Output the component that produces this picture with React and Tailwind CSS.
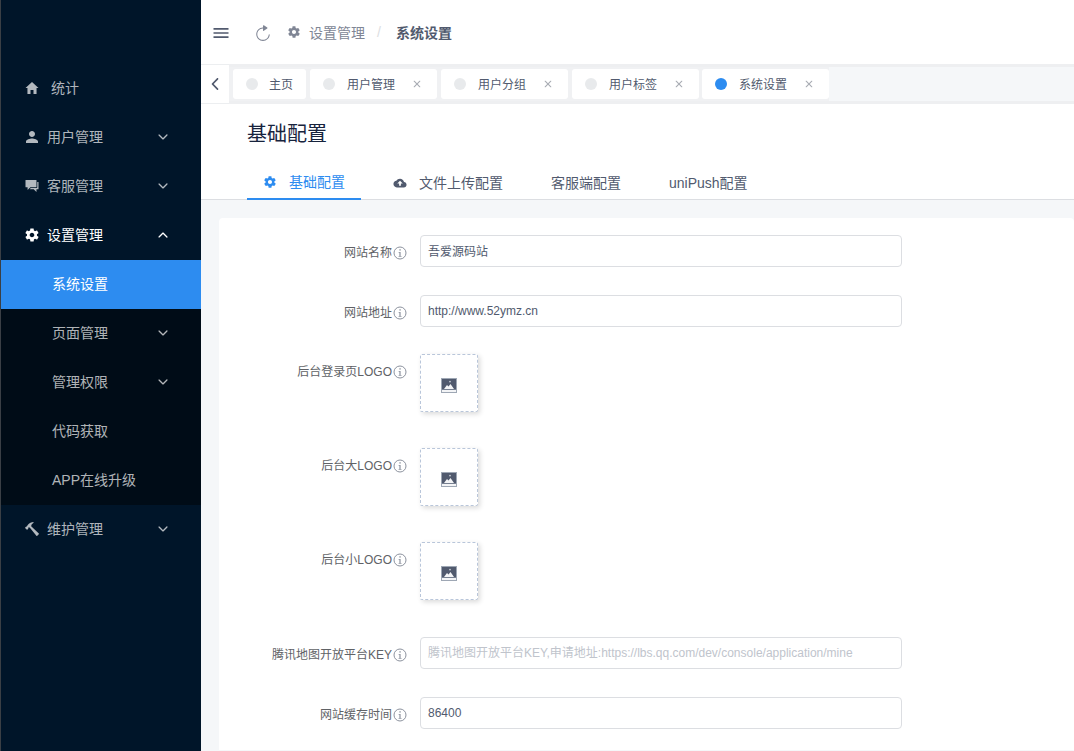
import React from "react";
import {
  IoMdHome, IoMdPerson, IoMdChatboxes, IoMdSettings, IoMdHammer, IoIosArrowDown, IoIosArrowUp,
  IoIosArrowBack, IoMdCloudUpload, IoIosRefresh, IoIosClose, IoMdMenu,
} from "react-icons/io";

const Info = () => (
  <svg width="14" height="14" viewBox="0 0 14 14" className="shrink-0">
    <circle cx="7" cy="7" r="6" fill="none" stroke="#8c929e" strokeWidth="1" />
    <rect x="6.4" y="3.2" width="1.3" height="1.4" fill="#8c929e" />
    <path d="M5.6 5.9H7.6V9.9H8.5V10.7H5.6V9.9H6.4V6.7H5.6Z" fill="#8c929e" />
  </svg>
);

const Pic = () => (
  <svg width="16" height="15" viewBox="0 0 16 15">
    <rect x="0" y="0" width="16" height="15" fill="#9ea7b4" />
    <rect x="1" y="1" width="14" height="10.5" fill="#515a6e" />
    <rect x="1" y="12" width="14" height="2" fill="#f3f4f6" />
    <path d="M3 11 L6 7 L7.5 8.5 L9.5 6 L13 11Z" fill="#f3f4f6" />
    <circle cx="9" cy="3.6" r="0.9" fill="#c7ccd4" />
  </svg>
);

const MenuItem = ({ icon: Icon, label, arrow, active, sub, iconSize = 16, textClass = "ml-[8px]" }) => (
  <div
    className={`flex h-[49px] items-center pb-[2px] text-sm ${active ? "text-white" : "text-white/70"} ${sub ? "pl-[51px]" : "pl-[24px]"}`}
  >
    {Icon && (
      <span className="flex w-[14px] justify-center">
        <Icon size={iconSize} className="shrink-0" />
      </span>
    )}
    <span className={sub ? "" : textClass}>{label}</span>
    {arrow === "down" && <IoIosArrowDown size={14} className="absolute left-[155px]" />}
    {arrow === "up" && <IoIosArrowUp size={14} className="absolute left-[155px]" />}
  </div>
);

const Tab = ({ label, active, close = true, className = "" }) => (
  <div className={`flex h-[30px] items-center rounded-[3px] bg-white pl-[13px] text-xs text-[#515a6e] ${className}`}>
    <span className={`h-3 w-3 rounded-full ${active ? "bg-[#2d8cf0]" : "bg-[#e8eaec]"}`} />
    <span className={`pt-[2px] ${close ? "ml-[12px]" : "ml-[11px]"}`}>{label}</span>
    {close && <IoIosClose size={18} className="ml-[13px] text-[#a8acb3]" />}
  </div>
);

const Row = ({ label, children, className = "mb-7" }) => (
  <div className={`flex ${className}`}>
    <div className="flex h-8 w-[188px] items-center justify-end pt-[3px] text-xs text-[#606266]">
      <span className="mr-px">{label}</span>
      <Info />
    </div>
    <div className="ml-[13px]">{children}</div>
  </div>
);

const Field = ({ value, placeholder, valueClass = "" }) => (
  <div className="flex h-8 w-[482px] items-center rounded border border-[#dcdee2] bg-white px-[7px] text-xs whitespace-nowrap">
    {value ? <span className={`text-[#515a6e] ${valueClass}`}>{value}</span> : <span className="text-[#c0c4cc]">{placeholder}</span>}
  </div>
);

const Upload = () => (
  <div className="flex h-[58px] w-[58px] items-center justify-center rounded-[2px] border border-dashed border-[#b9c6da] bg-white pt-[4px] shadow-[2px_2px_5px_rgba(0,0,0,0.15)]">
    <Pic />
  </div>
);

export default function App() {
  return (
    <div
      className="flex h-[751px] w-[1074px] overflow-hidden bg-white"
      style={{ fontFamily: '"Liberation Sans", "Noto Sans CJK SC", sans-serif' }}
    >
      <div className="w-px shrink-0 bg-[#3a3f45]" />
      <aside className="relative w-[200px] shrink-0 bg-[#001529] pt-[64px]">
        <MenuItem icon={IoMdHome} label="统计" textClass="ml-[12px]" />
        <MenuItem icon={IoMdPerson} label="用户管理" arrow="down" />
        <MenuItem icon={IoMdChatboxes} label="客服管理" arrow="down" />
        <MenuItem icon={IoMdSettings} label="设置管理" arrow="up" active />
        <div className="bg-[#000c17]">
          <div className="bg-[#2d8cf0]">
            <MenuItem label="系统设置" sub active />
          </div>
          <MenuItem label="页面管理" sub arrow="down" />
          <MenuItem label="管理权限" sub arrow="down" />
          <MenuItem label="代码获取" sub />
          <MenuItem label="APP在线升级" sub />
        </div>
        <MenuItem icon={IoMdHammer} label="维护管理" arrow="down" />
      </aside>

      <main className="flex min-w-0 flex-1 flex-col">
        <header className="flex h-16 shrink-0 items-center bg-white pl-[10px] text-sm">
          <IoMdMenu size={20} className="mt-px text-[#515a6e]" />
          <IoIosRefresh size={18} className="mt-px ml-[23px] text-[#808695]" />
          <IoMdSettings size={14} className="ml-[15px] text-[#808695]" />
          <span className="ml-[8px] pt-px text-sm text-[#808695]">设置管理</span>
          <span className="ml-[12px] text-[#dcdee2]">/</span>
          <span className="ml-[15px] pt-px text-sm font-bold text-[#515a6e]">系统设置</span>
        </header>

        <div className="flex h-10 shrink-0">
          <div className="flex h-full w-7 items-center justify-center border-y border-[#eceef0] bg-white">
            <IoIosArrowBack size={18} className="text-[#515a6e]" />
          </div>
          <div className="flex flex-1 border-y-[3px] border-[#eeeff1] bg-[#f5f7f9]">
            <div className="flex items-center gap-1 bg-[#f0f1f3] pl-1">
              <Tab label="主页" close={false} className="w-[73px]" />
              <Tab label="用户管理" className="w-[127px]" />
              <Tab label="用户分组" className="w-[127px]" />
              <Tab label="用户标签" className="w-[127px]" />
              <Tab label="系统设置" active className="-ml-px w-[127px]" />
            </div>
          </div>
        </div>

        <section className="h-[96px] shrink-0 border-b border-[#dcdee2] bg-white pl-[46px]">
          <h1 className="pt-[17px] text-xl leading-[27px] font-normal text-[#17233d]">基础配置</h1>
          <div className="mt-[20px] flex gap-4 text-sm">
            <div className="flex h-[32px] items-center border-b-2 border-[#2d8cf0] px-4 pb-[2px] text-[#2d8cf0]">
              <IoMdSettings size={14} />
              <span className="ml-[12px]">基础配置</span>
            </div>
            <div className="flex h-[32px] items-center px-4 pb-[2px] text-[#515a6e]">
              <IoMdCloudUpload size={14} />
              <span className="ml-[12px]">文件上传配置</span>
            </div>
            <div className="flex h-[32px] items-center px-4 pb-[2px] text-[#515a6e]">客服端配置</div>
            <div className="flex h-[32px] items-center px-4 pb-[2px] text-[#515a6e]">uniPush配置</div>
          </div>
        </section>

        <div className="min-h-0 flex-1 overflow-hidden bg-[#f5f7f9] pt-[18px] pb-px pl-[18px]">
          <div className="h-full rounded-t bg-white pt-[17px]">
            <Row label="网站名称"><Field value="吾爱源码站" valueClass="pt-[2px]" /></Row>
            <Row label="网站地址" className="mb-[27px]"><Field value="http://www.52ymz.cn" /></Row>
            <Row label="后台登录页LOGO" className="mb-9"><Upload /></Row>
            <Row label="后台大LOGO" className="mb-9"><Upload /></Row>
            <Row label="后台小LOGO" className="mb-[37px]"><Upload /></Row>
            <Row label="腾讯地图开放平台KEY"><Field placeholder="腾讯地图开放平台KEY,申请地址:https://lbs.qq.com/dev/console/application/mine" /></Row>
            <Row label="网站缓存时间" className="mb-0"><Field value="86400" /></Row>
          </div>
        </div>
      </main>
    </div>
  );
}
